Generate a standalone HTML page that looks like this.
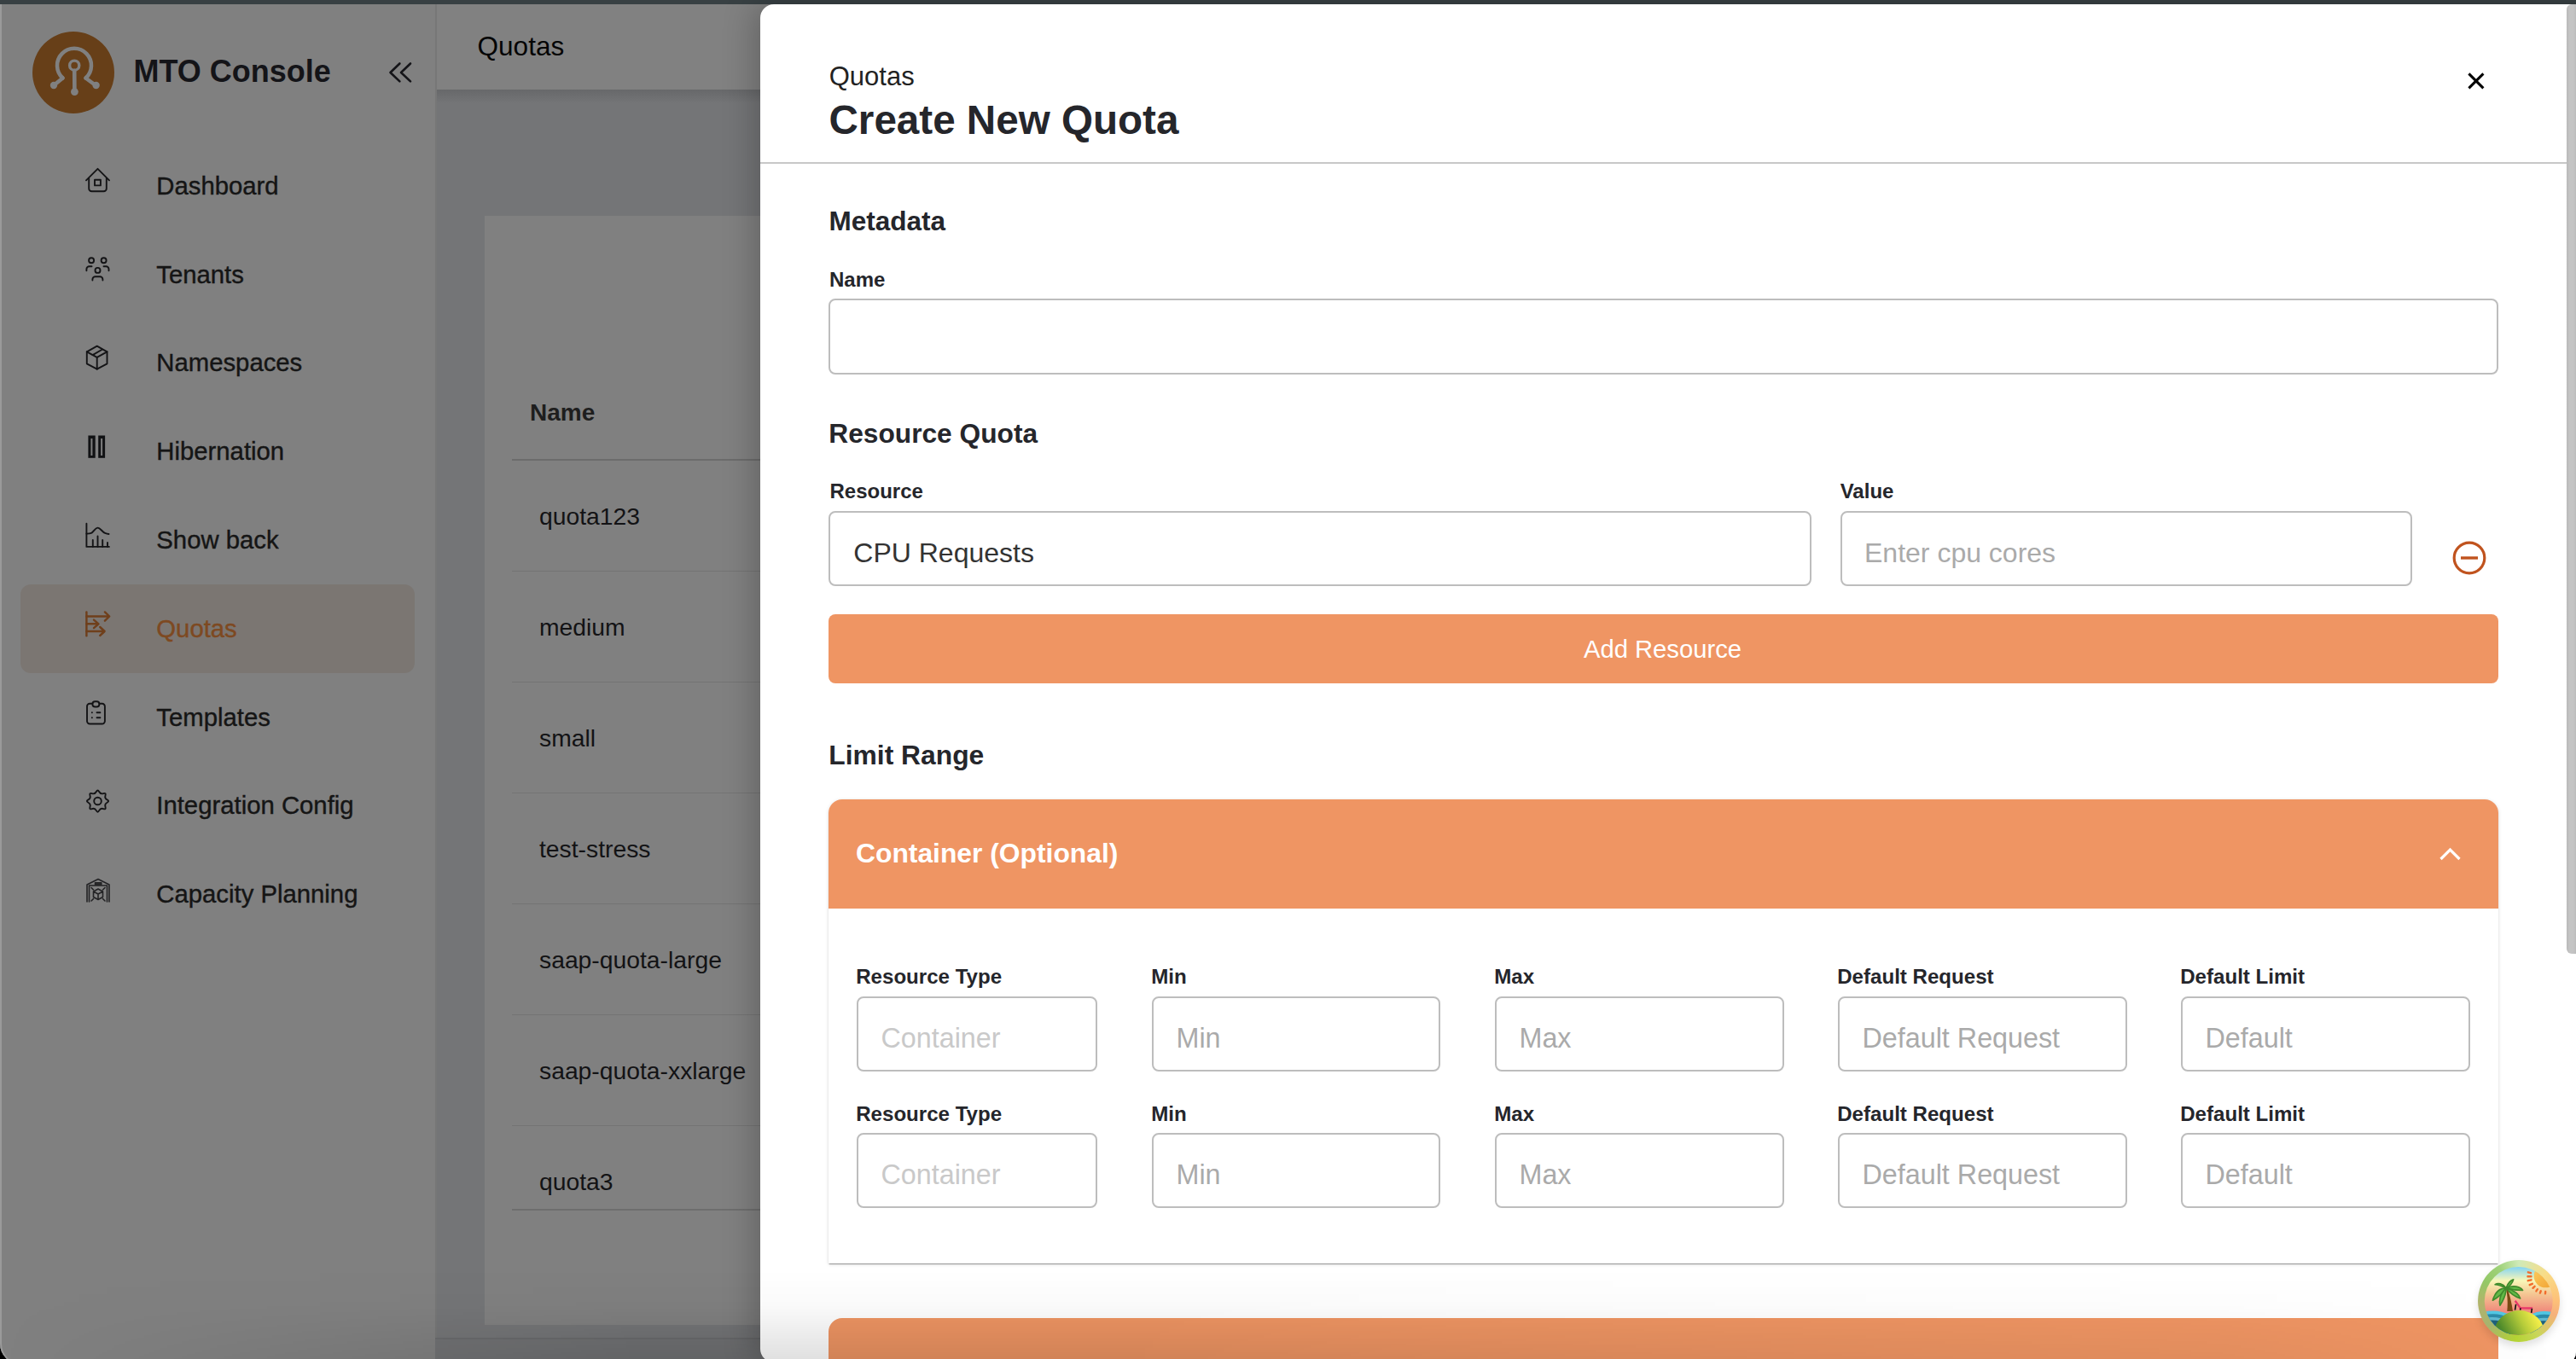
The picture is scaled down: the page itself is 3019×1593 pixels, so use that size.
<!DOCTYPE html>
<html><head><meta charset="utf-8"><title>MTO Console - Create New Quota</title>
<style>
html,body{margin:0;padding:0;}
body{width:3019px;height:1593px;overflow:hidden;position:relative;font-family:"Liberation Sans", sans-serif;background:#000;}
.t{position:absolute;white-space:nowrap;line-height:1;}
.r{position:absolute;}
</style></head><body>
<div id="win" style="position:absolute;left:0;top:0;width:3019px;height:1599px;overflow:hidden;border-radius:0 0 14px 24px;background:#808080;">
<div class="r" style="left:0px;top:0px;width:3019px;height:1593px;background:#808080;"></div>
<div class="r" style="left:510px;top:105px;width:2509px;height:1488px;background:#747577;"></div>
<div class="r" style="left:0px;top:5px;width:510px;height:1594px;background:#808080;"></div>
<div class="r" style="left:0px;top:5px;width:40px;height:1594px;box-shadow:inset 2px 0 0 0 #9a9a9a;border-bottom-left-radius:24px;"></div>
<div class="r" style="left:510px;top:5px;width:2px;height:1588px;background:#777;"></div>
<div class="r" style="left:512px;top:5px;width:2507px;height:100px;background:#818181;"></div>
<div class="r" style="left:512px;top:105px;width:2507px;height:16px;background:linear-gradient(#67686a,rgba(116,117,119,0));"></div>
<div class="r" style="left:568px;top:253px;width:2451px;height:1300px;background:#808080;"></div>
<div class="r" style="left:510px;top:1568px;width:2509px;height:2px;background:#6a6b6d;"></div>
<div class="r" style="left:510px;top:1570px;width:2509px;height:29px;background:#717274;"></div>
<div class="r" style="left:0px;top:0px;width:3019px;height:5px;background:#384043;"></div>
<svg class="r" style="left:0;top:0" width="900" height="1593" viewBox="0 0 900 1593">
<circle cx="86" cy="85" r="48" fill="#673f18"/>
<g stroke="#808080" fill="none" stroke-width="4.5" stroke-linecap="round">
<path d="M73.5 91.5 A20 20 0 1 1 100.5 91.5"/>
<path d="M73.5 91.5 L63 100"/><path d="M100.5 91.5 L112 100"/>
<circle cx="87.2" cy="76.7" r="5.6" stroke-width="3.4"/>
<path d="M87.2 83 L87.4 107" stroke-width="4.6"/>
</g>
<g fill="#808080"><circle cx="63" cy="100" r="4.2"/><circle cx="112.6" cy="100" r="4.2"/><circle cx="87.4" cy="107.6" r="4.4"/></g>
<g stroke="#141418" stroke-width="2.6" fill="none" stroke-linecap="round" stroke-linejoin="round">
<path d="M468.4 74.5 L457.5 85 L468.4 95.4"/><path d="M481 74.5 L470 85 L481 95.4"/>
</g>
</svg>
<div class="t" style="left:156.5px;top:66.3px;font-size:36px;font-weight:700;color:#141418;">MTO Console</div>
<div class="r" style="left:24px;top:685px;width:462px;height:104px;background:#7b7672;border-radius:12px;"></div>
<div class="t" style="left:183.3px;top:202.8px;font-size:29.3px;font-weight:400;color:#151515;-webkit-text-stroke:0.4px #151515;">Dashboard</div>
<div class="t" style="left:183.3px;top:306.6px;font-size:29.3px;font-weight:400;color:#151515;-webkit-text-stroke:0.4px #151515;">Tenants</div>
<div class="t" style="left:183.3px;top:410.4px;font-size:29.3px;font-weight:400;color:#151515;-webkit-text-stroke:0.4px #151515;">Namespaces</div>
<div class="t" style="left:183.3px;top:514.2px;font-size:29.3px;font-weight:400;color:#151515;-webkit-text-stroke:0.4px #151515;">Hibernation</div>
<div class="t" style="left:183.3px;top:618.0px;font-size:29.3px;font-weight:400;color:#151515;-webkit-text-stroke:0.4px #151515;">Show back</div>
<div class="t" style="left:183.3px;top:721.8px;font-size:29.3px;font-weight:400;color:#7e4921;-webkit-text-stroke:0.4px #7e4921;">Quotas</div>
<div class="t" style="left:183.3px;top:825.6px;font-size:29.3px;font-weight:400;color:#151515;-webkit-text-stroke:0.4px #151515;">Templates</div>
<div class="t" style="left:183.3px;top:929.4px;font-size:29.3px;font-weight:400;color:#151515;-webkit-text-stroke:0.4px #151515;">Integration Config</div>
<div class="t" style="left:183.3px;top:1033.2px;font-size:29.3px;font-weight:400;color:#151515;-webkit-text-stroke:0.4px #151515;">Capacity Planning</div>
<svg class="r" style="left:0;top:0" width="900" height="1593" viewBox="0 0 900 1593">
<g stroke="#141416" stroke-width="1.9" fill="none" stroke-linecap="round" stroke-linejoin="round">
<!-- dashboard -->
<path d="M101 211.3 L114.5 197.8 L128 211.3"/><path d="M104.2 209 V221 a3.3 3.3 0 0 0 3.3 3.3 H121.5 a3.3 3.3 0 0 0 3.3 -3.3 V209"/>
<rect x="111" y="210.8" width="6.9" height="6.6" stroke-linecap="butt"/>
<!-- tenants -->
<circle cx="107.1" cy="305.3" r="3"/><circle cx="121.6" cy="305.3" r="3"/><circle cx="114.5" cy="316.9" r="3"/>
<path d="M101.4 317.2 V315.5 a3.2 3.2 0 0 1 3.2 -3.2 H107.5"/><path d="M121.5 312.3 H124.3 a3.2 3.2 0 0 1 3.2 3.2 V317.2"/>
<path d="M108.4 328.6 V327.4 a3.2 3.2 0 0 1 3.2 -3.2 H117.2 a3.2 3.2 0 0 1 3.2 3.2 V328.6"/>
<!-- namespaces -->
<path d="M113.7 405.7 L101.8 412.3 V426.3 L113.7 432.7 L125.5 426.3 V412.3 Z"/><path d="M101.8 412.3 L113.7 418.9 L125.5 412.3"/><path d="M113.7 418.9 V432.7"/>
<path d="M108.6 416.1 L119.6 409.8"/>
<!-- showback -->
<path d="M101.4 613.8 V640.9 H127.9"/><path d="M108.8 633 V640.9 M114.5 628.5 V640.9 M120.2 633 V640.9 M126 635.9 V640.9"/>
<path d="M101.4 625.6 C104 625.6 105.5 625.5 107.5 624.6 C110 623 111.5 618.8 114.5 618.6 C117.5 618.5 119.5 623.5 123.1 624.9 C125 625.7 126 625.9 127.5 626"/>
<!-- templates -->
<path d="M108.4 824.8 H105.2 a3.2 3.2 0 0 0 -3.2 3.2 V845.3 a3.2 3.2 0 0 0 3.2 3.2 H119.7 a3.2 3.2 0 0 0 3.2 -3.2 V828 a3.2 3.2 0 0 0 -3.2 -3.2 H116.4"/>
<rect x="108.4" y="822.2" width="8" height="6.3" rx="3"/>
<path d="M107.8 835.3 h0.1 M113.5 835.3 H117.4 M107.8 841.2 h0.1 M113.5 841.2 H117.4"/>
<!-- gear -->
<path d="M112.85 928.03 Q114.50 924.90 116.15 928.03 Q117.79 931.15 121.17 930.11 Q124.54 929.06 123.49 932.43 Q122.45 935.81 125.57 937.45 Q128.70 939.10 125.57 940.75 Q122.45 942.39 123.49 945.77 Q124.54 949.14 121.17 948.09 Q117.79 947.05 116.15 950.17 Q114.50 953.30 112.85 950.17 Q111.21 947.05 107.83 948.09 Q104.46 949.14 105.51 945.77 Q106.55 942.39 103.43 940.75 Q100.30 939.10 103.43 937.45 Q106.55 935.81 105.51 932.43 Q104.46 929.06 107.83 930.11 Q111.21 931.15 112.85 928.03 Z"/>
<circle cx="114.5" cy="939" r="4.3"/>
</g>
<!-- hibernation -->
<g fill="#111214"><rect x="103.4" y="510.5" width="8.3" height="26.3"/><rect x="115.2" y="510.5" width="7.9" height="26.3"/></g>
<g fill="#7d7d7d"><rect x="106.4" y="514" width="2" height="20"/><rect x="118.1" y="514" width="2" height="20"/></g>
<!-- quotas -->
<g stroke="#6f3f1b" stroke-width="2.4" fill="none" stroke-linecap="round" stroke-linejoin="round">
<path d="M101.4 717.4 V745.3"/><path d="M101.4 722.5 H127.5 M122.9 717.4 L128.2 722.5 L122.9 727.7"/>
<path d="M101.4 731.3 H115 M110 726.6 L115.5 731.3 L110 736.1"/>
<path d="M101.4 740 H122 M117.2 735 L122.6 740 L117.2 745"/>
</g>
<!-- capacity -->
<g stroke="#232325" stroke-width="1.6" fill="none" stroke-linecap="round" stroke-linejoin="round">
<path d="M102 1057 V1037 L115 1030.5 L128 1037 V1057"/><path d="M104.5 1057 V1038 H125.5 V1057"/>
<rect x="111.5" y="1034.7" width="7.3" height="2.3" fill="#333"/>
<path d="M109.5 1045 L115 1042 L120.5 1045 V1051.5 L115 1054.5 L109.5 1051.5 Z M109.5 1045 L115 1048 L120.5 1045 M115 1048 V1054.5"/>
<path d="M107 1040.5 L109.5 1043 M123 1040.5 L120.5 1043 M107 1056 L109.5 1053.5 M123 1056 L120.5 1053.5"/>
</g>
</svg>
<div class="t" style="left:559.6px;top:39.3px;font-size:31.5px;font-weight:400;color:#050505;">Quotas</div>
<div class="t" style="left:621.0px;top:469.6px;font-size:28px;font-weight:700;color:#1e1e1e;">Name</div>
<div class="r" style="left:600px;top:538px;width:2419px;height:2px;background:#6c6c6c;"></div>
<div class="t" style="left:632.0px;top:591.0px;font-size:28.3px;font-weight:400;color:#131315;">quota123</div>
<div class="t" style="left:632.0px;top:721.0px;font-size:28.3px;font-weight:400;color:#131315;">medium</div>
<div class="t" style="left:632.0px;top:851.0px;font-size:28.3px;font-weight:400;color:#131315;">small</div>
<div class="t" style="left:632.0px;top:981.0px;font-size:28.3px;font-weight:400;color:#131315;">test-stress</div>
<div class="t" style="left:632.0px;top:1111.0px;font-size:28.3px;font-weight:400;color:#131315;">saap-quota-large</div>
<div class="t" style="left:632.0px;top:1241.0px;font-size:28.3px;font-weight:400;color:#131315;">saap-quota-xxlarge</div>
<div class="t" style="left:632.0px;top:1370.5px;font-size:28.3px;font-weight:400;color:#131315;">quota3</div>
<div class="r" style="left:600px;top:669px;width:2419px;height:1px;background:#747474;"></div>
<div class="r" style="left:600px;top:799px;width:2419px;height:1px;background:#747474;"></div>
<div class="r" style="left:600px;top:929px;width:2419px;height:1px;background:#747474;"></div>
<div class="r" style="left:600px;top:1059px;width:2419px;height:1px;background:#747474;"></div>
<div class="r" style="left:600px;top:1189px;width:2419px;height:1px;background:#747474;"></div>
<div class="r" style="left:600px;top:1319px;width:2419px;height:1px;background:#747474;"></div>
<div class="r" style="left:600px;top:1417px;width:2419px;height:2px;background:#6e6e6e;"></div>
<div class="r" style="left:891px;top:5px;width:2200px;height:1592px;background:#fff;border-radius:16px 0 0 16px;box-shadow:-8px 0 36px rgba(0,0,0,0.22);overflow:hidden;">
<div class="r" style="left:-891px;top:-5px;width:3019px;height:1593px;">
<div class="t" style="left:971.7px;top:73.8px;font-size:31px;font-weight:400;color:#222;">Quotas</div>
<div class="t" style="left:971.5px;top:117.3px;font-size:47.6px;font-weight:700;color:#25262b;">Create New Quota</div>
<div class="r" style="left:891px;top:190px;width:2117px;height:2px;background:#c8c8c8;"></div>
<div class="t" style="left:971.5px;top:244.3px;font-size:31.5px;font-weight:700;color:#25262b;">Metadata</div>
<div class="t" style="left:972.0px;top:316.2px;font-size:24px;font-weight:700;color:#25262b;">Name</div>
<div class="r" style="left:971px;top:350px;width:1957px;height:89px;border:2px solid #bdbdbd;border-radius:8px;box-sizing:border-box;background:#fff;"></div>
<div class="t" style="left:971.3px;top:492.7px;font-size:31.7px;font-weight:700;color:#25262b;">Resource Quota</div>
<div class="t" style="left:972.5px;top:563.7px;font-size:24px;font-weight:700;color:#25262b;">Resource</div>
<div class="t" style="left:2156.7px;top:563.7px;font-size:24px;font-weight:700;color:#25262b;">Value</div>
<div class="r" style="left:971px;top:599px;width:1152px;height:88px;border:2px solid #bdbdbd;border-radius:8px;box-sizing:border-box;background:#fff;"></div>
<div class="r" style="left:2157px;top:599px;width:670px;height:88px;border:2px solid #bdbdbd;border-radius:8px;box-sizing:border-box;background:#fff;"></div>
<div class="t" style="left:1000.3px;top:631.9px;font-size:32px;font-weight:400;color:#333;">CPU Requests</div>
<div class="t" style="left:2185.0px;top:631.9px;font-size:32px;font-weight:400;color:#aaa;">Enter cpu cores</div>
<svg class="r" style="left:2870px;top:630px" width="48" height="48" viewBox="0 0 48 48"><circle cx="24" cy="24" r="17.8" fill="none" stroke="#c0531e" stroke-width="3.2"/><path d="M14 24 H34" stroke="#c0531e" stroke-width="3.4"/></svg>
<div class="r" style="left:971px;top:720px;width:1957px;height:81px;background:#ef9563;border-radius:8px;"></div>
<div class="t" style="left:1856.0px;top:746.8px;font-size:29.2px;font-weight:400;color:#fff;">Add Resource</div>
<div class="t" style="left:971.3px;top:870.1px;font-size:31.8px;font-weight:700;color:#25262b;">Limit Range</div>
<div class="r" style="left:971px;top:937px;width:1957px;height:544px;background:#fff;border-radius:16px 16px 0 0;box-shadow:0px 2px 1px -1px rgba(0,0,0,0.25),0px 1px 1px 0px rgba(0,0,0,0.16),0px 1px 4px 0px rgba(0,0,0,0.14);"></div>
<div class="r" style="left:971px;top:937px;width:1957px;height:128px;background:#ef9563;border-radius:16px 16px 0 0;"></div>
<div class="t" style="left:1003.0px;top:985.1px;font-size:31.8px;font-weight:700;color:#fff;">Container (Optional)</div>
<svg class="r" style="left:2852px;top:985px" width="40" height="30" viewBox="0 0 40 30"><path d="M8.5 22 L19.5 11 L30.5 22" fill="none" stroke="#fff" stroke-width="3.2"/></svg>
<div class="t" style="left:1003.2px;top:1133.0px;font-size:24.1px;font-weight:700;color:#25262b;">Resource Type</div>
<div class="r" style="left:1004px;top:1168px;width:282px;height:88px;border:2px solid #bdbdbd;border-radius:8px;box-sizing:border-box;background:#fff;"></div>
<div class="t" style="left:1032.5px;top:1201.0px;font-size:32.3px;font-weight:400;color:#c9c9c9;">Container</div>
<div class="t" style="left:1349.2px;top:1133.0px;font-size:24.1px;font-weight:700;color:#25262b;">Min</div>
<div class="r" style="left:1350px;top:1168px;width:338px;height:88px;border:2px solid #bdbdbd;border-radius:8px;box-sizing:border-box;background:#fff;"></div>
<div class="t" style="left:1378.5px;top:1201.0px;font-size:32.3px;font-weight:400;color:#aaa;">Min</div>
<div class="t" style="left:1751.2px;top:1133.0px;font-size:24.1px;font-weight:700;color:#25262b;">Max</div>
<div class="r" style="left:1752px;top:1168px;width:339px;height:88px;border:2px solid #bdbdbd;border-radius:8px;box-sizing:border-box;background:#fff;"></div>
<div class="t" style="left:1780.5px;top:1201.0px;font-size:32.3px;font-weight:400;color:#aaa;">Max</div>
<div class="t" style="left:2153.2px;top:1133.0px;font-size:24.1px;font-weight:700;color:#25262b;">Default Request</div>
<div class="r" style="left:2154px;top:1168px;width:339px;height:88px;border:2px solid #bdbdbd;border-radius:8px;box-sizing:border-box;background:#fff;"></div>
<div class="t" style="left:2182.5px;top:1201.0px;font-size:32.3px;font-weight:400;color:#aaa;">Default Request</div>
<div class="t" style="left:2555.2px;top:1133.0px;font-size:24.1px;font-weight:700;color:#25262b;">Default Limit</div>
<div class="r" style="left:2556px;top:1168px;width:339px;height:88px;border:2px solid #bdbdbd;border-radius:8px;box-sizing:border-box;background:#fff;"></div>
<div class="t" style="left:2584.5px;top:1201.0px;font-size:32.3px;font-weight:400;color:#aaa;">Default</div>
<div class="t" style="left:1003.2px;top:1293.6px;font-size:24.1px;font-weight:700;color:#25262b;">Resource Type</div>
<div class="r" style="left:1004px;top:1328px;width:282px;height:88px;border:2px solid #bdbdbd;border-radius:8px;box-sizing:border-box;background:#fff;"></div>
<div class="t" style="left:1032.5px;top:1361.0px;font-size:32.3px;font-weight:400;color:#c9c9c9;">Container</div>
<div class="t" style="left:1349.2px;top:1293.6px;font-size:24.1px;font-weight:700;color:#25262b;">Min</div>
<div class="r" style="left:1350px;top:1328px;width:338px;height:88px;border:2px solid #bdbdbd;border-radius:8px;box-sizing:border-box;background:#fff;"></div>
<div class="t" style="left:1378.5px;top:1361.0px;font-size:32.3px;font-weight:400;color:#aaa;">Min</div>
<div class="t" style="left:1751.2px;top:1293.6px;font-size:24.1px;font-weight:700;color:#25262b;">Max</div>
<div class="r" style="left:1752px;top:1328px;width:339px;height:88px;border:2px solid #bdbdbd;border-radius:8px;box-sizing:border-box;background:#fff;"></div>
<div class="t" style="left:1780.5px;top:1361.0px;font-size:32.3px;font-weight:400;color:#aaa;">Max</div>
<div class="t" style="left:2153.2px;top:1293.6px;font-size:24.1px;font-weight:700;color:#25262b;">Default Request</div>
<div class="r" style="left:2154px;top:1328px;width:339px;height:88px;border:2px solid #bdbdbd;border-radius:8px;box-sizing:border-box;background:#fff;"></div>
<div class="t" style="left:2182.5px;top:1361.0px;font-size:32.3px;font-weight:400;color:#aaa;">Default Request</div>
<div class="t" style="left:2555.2px;top:1293.6px;font-size:24.1px;font-weight:700;color:#25262b;">Default Limit</div>
<div class="r" style="left:2556px;top:1328px;width:339px;height:88px;border:2px solid #bdbdbd;border-radius:8px;box-sizing:border-box;background:#fff;"></div>
<div class="t" style="left:2584.5px;top:1361.0px;font-size:32.3px;font-weight:400;color:#aaa;">Default</div>
<div class="r" style="left:971px;top:1545px;width:1957px;height:155px;background:#ef9563;border-radius:16px 16px 0 0;"></div>
</div></div>
<div class="r" style="left:3008px;top:5px;width:11px;height:1113px;background:linear-gradient(to right,#b9b9b9,#c4c4c4 30%,#c4c4c4 70%,#bcbcbc);border-radius:6px 0 0 6px;"></div>
<svg class="r" style="left:2880px;top:73px" width="44" height="44" viewBox="0 0 44 44"><path d="M13.4 13.4 L30.4 30.4 M30.4 13.4 L13.4 30.4" stroke="#000" stroke-width="3"/></svg>
<div class="r" style="left:0px;top:1488px;width:3019px;height:105px;background:linear-gradient(rgba(0,0,0,0),rgba(0,0,0,0.02) 40%,rgba(0,0,0,0.12));-webkit-mask-image:linear-gradient(to right,rgba(0,0,0,0),#000 750px,#000 1300px,rgba(0,0,0,0.45) 2600px,rgba(0,0,0,0) 3000px);"></div>
<div class="r" style="left:2904px;top:1477px;width:96px;height:96px;border-radius:50%;background:conic-gradient(from 0deg,#cfeab8,#f9dc86 45deg,#fdc078 90deg,#f6b07c 110deg,#c9d65a 150deg,#b3d333 185deg,#a6b46e 230deg,#b3b36c 265deg,#94c866 300deg,#9fd27a 330deg,#cfeab8 360deg);box-shadow:0 5px 10px rgba(0,0,0,0.12);"></div>
<svg class="r" style="left:2895px;top:1470px" width="124" height="123" viewBox="0 0 1370 1359">
<defs>
<linearGradient id="sky" x1="0" y1="165" x2="0" y2="760" gradientUnits="userSpaceOnUse"><stop offset="0" stop-color="#82d3f4"/><stop offset="0.3" stop-color="#f8f7b8"/><stop offset="0.6" stop-color="#f4c592"/><stop offset="1" stop-color="#f0857a"/></linearGradient>
<linearGradient id="hill" x1="420" y1="1000" x2="860" y2="760" gradientUnits="userSpaceOnUse"><stop offset="0" stop-color="#4d8a2b"/><stop offset="0.55" stop-color="#b6cc3a"/><stop offset="1" stop-color="#fbf24a"/></linearGradient>
<linearGradient id="sun" x1="820" y1="230" x2="1030" y2="440" gradientUnits="userSpaceOnUse"><stop offset="0" stop-color="#fbc85a"/><stop offset="1" stop-color="#f2a637"/></linearGradient>
<clipPath id="cc"><circle cx="627" cy="607" r="442"/></clipPath>
</defs>
<g clip-path="url(#cc)">
<rect x="0" y="0" width="1370" height="1359" fill="url(#sky)"/>
<circle cx="975" cy="285" r="150" fill="url(#sun)"/>
<g stroke="#f26b2b" stroke-width="26" stroke-linecap="round">
<path d="M750 235 L785 245 M745 290 L790 290 M748 345 L790 335 M770 400 L805 385 M812 440 L835 418 M855 480 L872 455 M905 505 L915 478 M972 512 L975 485"/>
</g>
<path d="M150 760 Q330 700 520 790 L520 1100 L150 1100 Z" fill="#52c6e2"/>
<path d="M150 800 Q330 740 520 830 L520 1100 L150 1100 Z" fill="#2b8aa8"/>
<path d="M150 835 Q330 790 520 870 L520 1100 L150 1100 Z" fill="#5fb8d0"/>
<path d="M150 870 Q330 830 520 905 L520 1100 L150 1100 Z" fill="#1f5f78"/>
<path d="M780 790 Q900 710 1100 760 L1100 1100 L780 1100 Z" fill="#52c6e2"/>
<path d="M780 830 Q900 750 1100 800 L1100 1100 L780 1100 Z" fill="#2b8aa8"/>
<path d="M780 865 Q900 800 1100 840 L1100 1100 L780 1100 Z" fill="#5fb8d0"/>
<path d="M780 900 Q900 840 1100 880 L1100 1100 L780 1100 Z" fill="#1f5f78"/>
<ellipse cx="635" cy="1040" rx="330" ry="310" fill="url(#hill)"/>
<path d="M478 740 C490 620 480 520 462 440 L478 436 C510 520 535 620 552 740 Z" fill="#7b4a14"/>
<g fill="#62b847" stroke="#3f8a2c" stroke-width="18" stroke-linejoin="round">
<path d="M465 440 C380 440 320 500 292 600 C360 560 420 520 465 440 Z"/>
<path d="M465 440 C400 500 370 580 385 665 C430 600 465 520 465 440 Z"/>
<path d="M465 440 C420 380 360 370 322 395 C380 400 420 420 465 440 Z"/>
<path d="M465 440 C490 370 520 340 560 330 C545 380 510 420 465 440 Z"/>
<path d="M465 440 C560 400 650 420 680 470 C600 470 530 460 465 440 Z"/>
<path d="M465 440 C560 470 630 510 648 575 C570 550 510 500 465 440 Z"/>
</g>
<path d="M582 605 L650 700 L808 702" fill="none" stroke="#e8386a" stroke-width="26" stroke-linejoin="round"/>
<path d="M592 650 L580 725 M652 700 L648 725 M800 705 L792 760" stroke="#111" stroke-width="18"/>
</g>
</svg>
</div>
</body></html>
